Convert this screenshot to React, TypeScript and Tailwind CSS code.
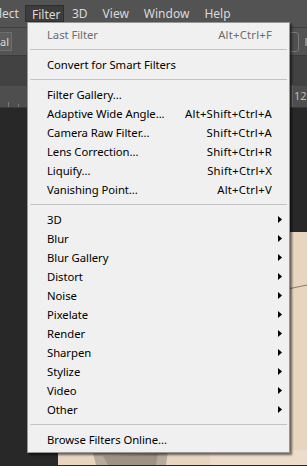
import React from "react";

const font = { fontFamily: '"Noto Sans", "Open Sans", sans-serif' };

type Item =
  | { kind: "item"; label: string; shortcut?: string; disabled?: boolean; sub?: boolean }
  | { kind: "sep" };

const items: Item[] = [
  { kind: "item", label: "Last Filter", shortcut: "Alt+Ctrl+F", disabled: true },
  { kind: "sep" },
  { kind: "item", label: "Convert for Smart Filters" },
  { kind: "sep" },
  { kind: "item", label: "Filter Gallery..." },
  { kind: "item", label: "Adaptive Wide Angle...", shortcut: "Alt+Shift+Ctrl+A" },
  { kind: "item", label: "Camera Raw Filter...", shortcut: "Shift+Ctrl+A" },
  { kind: "item", label: "Lens Correction...", shortcut: "Shift+Ctrl+R" },
  { kind: "item", label: "Liquify...", shortcut: "Shift+Ctrl+X" },
  { kind: "item", label: "Vanishing Point...", shortcut: "Alt+Ctrl+V" },
  { kind: "sep" },
  { kind: "item", label: "3D", sub: true },
  { kind: "item", label: "Blur", sub: true },
  { kind: "item", label: "Blur Gallery", sub: true },
  { kind: "item", label: "Distort", sub: true },
  { kind: "item", label: "Noise", sub: true },
  { kind: "item", label: "Pixelate", sub: true },
  { kind: "item", label: "Render", sub: true },
  { kind: "item", label: "Sharpen", sub: true },
  { kind: "item", label: "Stylize", sub: true },
  { kind: "item", label: "Video", sub: true },
  { kind: "item", label: "Other", sub: true },
  { kind: "sep" },
  { kind: "item", label: "Browse Filters Online..." },
];

function Arrow() {
  return (
    <svg width="4" height="7" viewBox="0 0 4 7" className="block">
      <path d="M0 0 L4 3.5 L0 7 Z" fill="#000" />
    </svg>
  );
}

export default function App() {
  return (
    <div className="relative w-[307px] h-[466px] overflow-hidden bg-[#282828]" style={font}>
      {/* menu bar */}
      <div className="h-[28px] bg-[#535353] border-b border-[#3f3f3f] flex items-start pt-[5px] text-[12px] text-[#dadada]">
        <span className="ml-[-1px] leading-[17px]">lect</span>
        <span className="ml-[6px] px-[6px] h-[17px] leading-[17px] bg-[#3c3c3c] border border-[#2e2e2e] w-[39px]">Filter</span>
        <span className="ml-[8px] leading-[17px]">3D</span>
        <span className="ml-[15px] leading-[17px]">View</span>
        <span className="ml-[15px] leading-[17px]">Window</span>
        <span className="ml-[15px] leading-[17px]">Help</span>
      </div>
      {/* options bar */}
      <div className="h-[28px] bg-[#535353] border-b border-[#3a3a3a] flex items-center justify-between">
        <div className="h-[19px] w-[12px] bg-[#5d5d5d] border border-l-0 border-[#6e6e6e] text-[11px] text-[#dadada] leading-[17px]">
          <span>al</span>
        </div>
        <div className="flex items-center gap-[6px]">
          <div className="h-[20px] w-[12px] rounded-[3px] border border-[#7a7a7a] bg-[#505050]" />
          <div className="h-[8px] w-[3px] bg-[#8a8a8a] mr-[-1px]" />
        </div>
      </div>
      {/* tab bar */}
      <div className="h-[30px] bg-[#424242]" />
      {/* ruler */}
      <div className="h-[22px] bg-[#4e4e4e] border-b border-[#3a3a3a] flex items-end text-[11px] text-[#bdbdbd] relative">
        <div className="w-[9px] h-[5px] border-r border-[#777]" />
        <div className="w-[10px] h-[3px] border-r border-[#777]" />
        <div className="w-[9px] h-[22px] border-r border-[#777]" />
        <span className="leading-[20px] self-start ml-[1px]">2</span>
        <div className="flex-1" />
        <div className="w-[1px] h-[22px] bg-[#777]" />
        <span className="leading-[20px] self-start ml-[1px] w-[13px]">12</span>
      </div>
      {/* canvas */}
      <div className="flex h-[357px]">
        <div className="w-[58px]" />
        <div className="flex-1 flex flex-col">
          <div className="h-[124px]" />
          <div className="flex-1 bg-[#e8d5c0] relative overflow-hidden">
            <svg className="absolute left-0 top-0" width="249" height="233">
              <line x1="225" y1="58" x2="249" y2="53" stroke="#8a7a6a" strokeWidth="1" />
              <path d="M35 221 L110 219 L108 233 L38 233 Z" fill="#b8ab9c" />
              <path d="M45 224 L100 222 L98 233 L50 233 Z" fill="#8e8478" opacity="0.6" />
              <rect x="152" y="218" width="97" height="15" fill="#ecdcc9" />
            </svg>
          </div>
        </div>
      </div>

      {/* dropdown menu */}
      <div className="absolute left-[27px] top-[22px] w-[263px] bg-[#f0f0f0] border border-[#979797] pt-[2px] pb-[3px] shadow-[2px_2px_2px_rgba(0,0,0,0.55)] text-[11.3px] tracking-[-0.05px] text-black">
        {items.map((it, i) =>
          it.kind === "sep" ? (
            <div key={i} className="h-[11px] flex items-center px-[2px]">
              <div className="h-[1px] w-full bg-[#c4c4c4]" />
            </div>
          ) : (
            <div key={i} className="h-[19px] flex items-center pl-[19px] pr-[7px]">
              <span className={`flex-1 leading-[19px] ${it.disabled ? "text-[#6d6d6d]" : ""}`}>{it.label}</span>
              {it.shortcut && (
                <span className={`leading-[19px] mr-[10px] tracking-[0.2px] ${it.disabled ? "text-[#6d6d6d]" : ""}`}>{it.shortcut}</span>
              )}
              {it.sub && <Arrow />}
            </div>
          )
        )}
      </div>
    </div>
  );
}
